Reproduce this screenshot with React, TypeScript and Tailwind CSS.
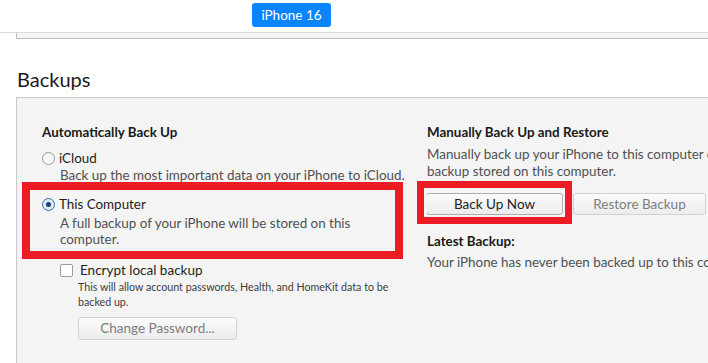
import React from 'react';

const Radio: React.FC<{ checked?: boolean }> = ({ checked }) => (
  <span
    className={`flex h-[13px] w-[13px] shrink-0 items-center justify-center rounded-full border ${
      checked ? 'border-[#3b6ea5] bg-[#dbe8f6]' : 'border-[#9a9a9a] bg-gradient-to-b from-[#f0f0f0] to-[#fdfdfd]'
    }`}
  >
    {checked && <span className="h-[5px] w-[5px] rounded-full bg-[#1c3f6e]" />}
  </span>
);

const Button: React.FC<{ label: string; width: string; disabled?: boolean; className?: string }> = ({
  label,
  width,
  disabled,
  className = '',
}) => (
  <div
    className={`flex h-[22px] items-center justify-center rounded-[3px] border bg-gradient-to-b from-[#fbfbfb] to-[#ececec] text-[13.5px] ${width} ${
      disabled ? 'border-[#d2d2d2] text-[#7d7d7d]' : 'border-[#adadad] text-[#222]'
    } ${className}`}
  >
    {label}
  </div>
);

export default function App() {
  return (
    <div className="relative h-[363px] w-[708px] overflow-hidden bg-white font-['Lato',sans-serif] text-[#1e1e1e]">
      {/* device tab */}
      <div className="h-[32px]">
        <div className="ml-[252px] mt-[3px] inline-flex h-[24px] w-[79px] items-center justify-center rounded-[3px] bg-[#0a84ff] text-[13.5px] text-white">
          iPhone 16
        </div>
      </div>
      <div className="h-px bg-[#dcdcdc]" />
      <div className="ml-[16px] h-[6px] border-b border-l border-[#bdbdbd] bg-[#f3f3f3]" />

      <h2 className="ml-[17px] mt-[28px] text-[20px] leading-[24px] text-[#1a1a1a]">Backups</h2>

      {/* panel */}
      <div className="ml-[16px] mt-[6px] flex h-[270px] border-l border-t border-[#cacaca] bg-[#f4f4f4] text-[13.4px] leading-[17px]">
        <div className="w-[410px] shrink-0 pl-[25px] pt-[26px]">
          <div className="font-bold text-[#1a1a1a]">Automatically Back Up</div>

          <div className="mt-[9px] flex items-center gap-[4px]">
            <Radio />
            <span>iCloud</span>
          </div>
          <div className="pl-[18px] text-[#505050] whitespace-nowrap">
            Back up the most important data on your iPhone to iCloud.
          </div>

          <div className="mt-[12px] flex items-center gap-[4px]">
            <Radio checked />
            <span>This Computer</span>
          </div>
          <div className="mt-[2px] pl-[18px] leading-[16px] text-[#505050]">
            A full backup of your iPhone will be stored on this
            <br />
            computer.
          </div>

          <div className="ml-[18px] mt-[15px] flex items-center gap-[7px]">
            <span className="h-[13px] w-[13px] rounded-[2px] border border-[#9a9a9a] bg-white" />
            <span className="text-[13.5px]">Encrypt local backup</span>
          </div>
          <div className="pl-[36px] text-[10.7px] leading-[15px] text-[#3c3c3c]">
            This will allow account passwords, Health, and HomeKit data to be
            <br />
            backed up.
          </div>
          <Button label="Change Password..." width="w-[159px]" disabled className="ml-[36px] mt-[8px] h-[23px]" />
        </div>

        <div className="min-w-0 flex-1 overflow-hidden whitespace-nowrap pt-[26px]">
          <div className="font-bold text-[#1a1a1a]">Manually Back Up and Restore</div>
          <div className="mt-[5px] text-[#505050]">
            Manually back up your iPhone to this computer or restore a
            <br />
            backup stored on this computer.
          </div>
          <div className="ml-[-1px] mt-[13px] flex gap-[10px]">
            <Button label="Back Up Now" width="w-[137px]" />
            <Button label="Restore Backup" width="w-[133px]" disabled />
          </div>
          <div className="mt-[18px] font-bold text-[#1a1a1a]">Latest Backup:</div>
          <div className="mt-[4px] text-[#505050]">Your iPhone has never been backed up to this computer.</div>
        </div>
      </div>

      {/* annotation boxes */}
      <div className="absolute left-[22px] top-[182px] h-[77px] w-[381px] border-[8px] border-[#ed1c24]" />
      <div className="absolute left-[417px] top-[181px] h-[43px] w-[155px] border-[7px] border-[#ed1c24]" />
    </div>
  );
}
